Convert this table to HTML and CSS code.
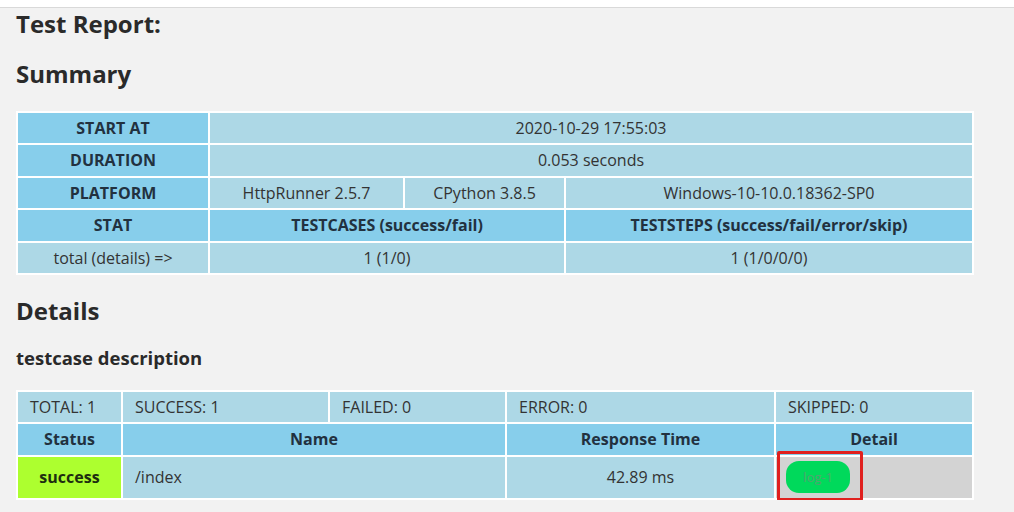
FILE: index.html
```html
<!DOCTYPE html>
<html lang="en">
<head>
<meta charset="utf-8">
<title>Test Report</title>
<link rel="stylesheet" href="styles.css">
</head>
<body>
<div class="topbar"></div>
<main class="page">
  <h2 class="title">Test Report:</h2>
  <h2 class="section">Summary</h2>
  <table class="summary">
    <colgroup>
      <col class="c1"><col class="c2"><col class="c3"><col class="c4">
    </colgroup>
    <tr><th>START AT</th><td colspan="3">2020-10-29 17:55:03</td></tr>
    <tr><th>DURATION</th><td colspan="3">0.053 seconds</td></tr>
    <tr><th>PLATFORM</th><td>HttpRunner 2.5.7</td><td>CPython 3.8.5</td><td>Windows-10-10.0.18362-SP0</td></tr>
    <tr><th>STAT</th><th colspan="2">TESTCASES (success/fail)</th><th>TESTSTEPS (success/fail/error/skip)</th></tr>
    <tr><td>total (details) =&gt;</td><td colspan="2">1 (1/0)</td><td>1 (1/0/0/0)</td></tr>
  </table>

  <h2 class="section details-title">Details</h2>
  <h3 class="subsection">testcase description</h3>
  <table class="details">
    <colgroup>
      <col class="d1"><col class="d2"><col class="d3"><col class="d4"><col class="d5">
    </colgroup>
    <tr class="counts"><td>TOTAL: 1</td><td>SUCCESS: 1</td><td>FAILED: 0</td><td>ERROR: 0</td><td>SKIPPED: 0</td></tr>
    <tr><th>Status</th><th colspan="2">Name</th><th>Response Time</th><th>Detail</th></tr>
    <tr class="step">
      <th class="success">success</th>
      <td colspan="2" class="name">/index</td>
      <td class="time">42.89 ms</td>
      <td class="detail"><div class="detail-wrap"><a class="button">log-1</a><span class="highlight"></span></div></td>
    </tr>
  </table>
</main>
</body>
</html>
```
FILE: styles.css
```css
html, body {
  margin: 0;
  padding: 0;
}
body {
  background: #f2f2f2;
  color: #333;
  font-family: "Open Sans", "Noto Sans", sans-serif;
  font-size: 16px;
}
.topbar {
  height: 7px;
  background: #fff;
  border-bottom: 1px solid #d9d9d9;
}
.page {
  padding: 0 0 0 16px;
}
h2 {
  font-size: 24px;
  line-height: 32px;
  font-weight: 700;
  margin: 0;
  color: #2a2a2a;
}
.title {
  margin-top: 0;
}
.section {
  margin-top: 18px;
  margin-bottom: 21px;
}
.details-title {
  margin-top: 20px;
  margin-bottom: 18px;
}
.subsection {
  font-size: 18.5px;
  line-height: 26px;
  margin: 0 0 19px 0;
  color: #2a2a2a;
}
table {
  border-collapse: collapse;
  table-layout: fixed;
  width: 956px;
}
th, td {
  border: 2px solid #fff;
  line-height: 20.4px;
  padding: 5px 12px;
}
th {
  background: #87ceeb;
  color: #22313f;
  font-weight: 700;
  text-align: center;
}
td {
  background: #add8e6;
  text-align: center;
}
.c1 { width: 192px; }
.c2 { width: 195px; }
.c3 { width: 161px; }
.c4 { width: 408px; }

.d1 { width: 105px; }
.d2 { width: 207px; }
.d3 { width: 177px; }
.d4 { width: 269px; }
.d5 { width: 198px; }

.details .counts td {
  text-align: left;
}
.details .step td, .details .step th {
  height: 31px;
}
.details .success {
  background: #adff2f;
  color: #1e2e10;
}
.details .name {
  text-align: left;
}
.details .detail {
  background: #d3d3d3;
  text-align: left;
  padding: 0 10px;
}
.detail-wrap {
  position: relative;
  display: flex;
  align-items: center;
}
.button {
  display: inline-block;
  width: 64px;
  height: 32px;
  line-height: 32px;
  text-align: center;
  border-radius: 13px;
  background: #00d95b;
  color: #4fa470;
  font-size: 13px;
}
.highlight {
  position: absolute;
  left: -9px;
  top: -10px;
  width: 80px;
  height: 44px;
  border: 3px solid #e0201e;
  border-radius: 2px;
}
```
